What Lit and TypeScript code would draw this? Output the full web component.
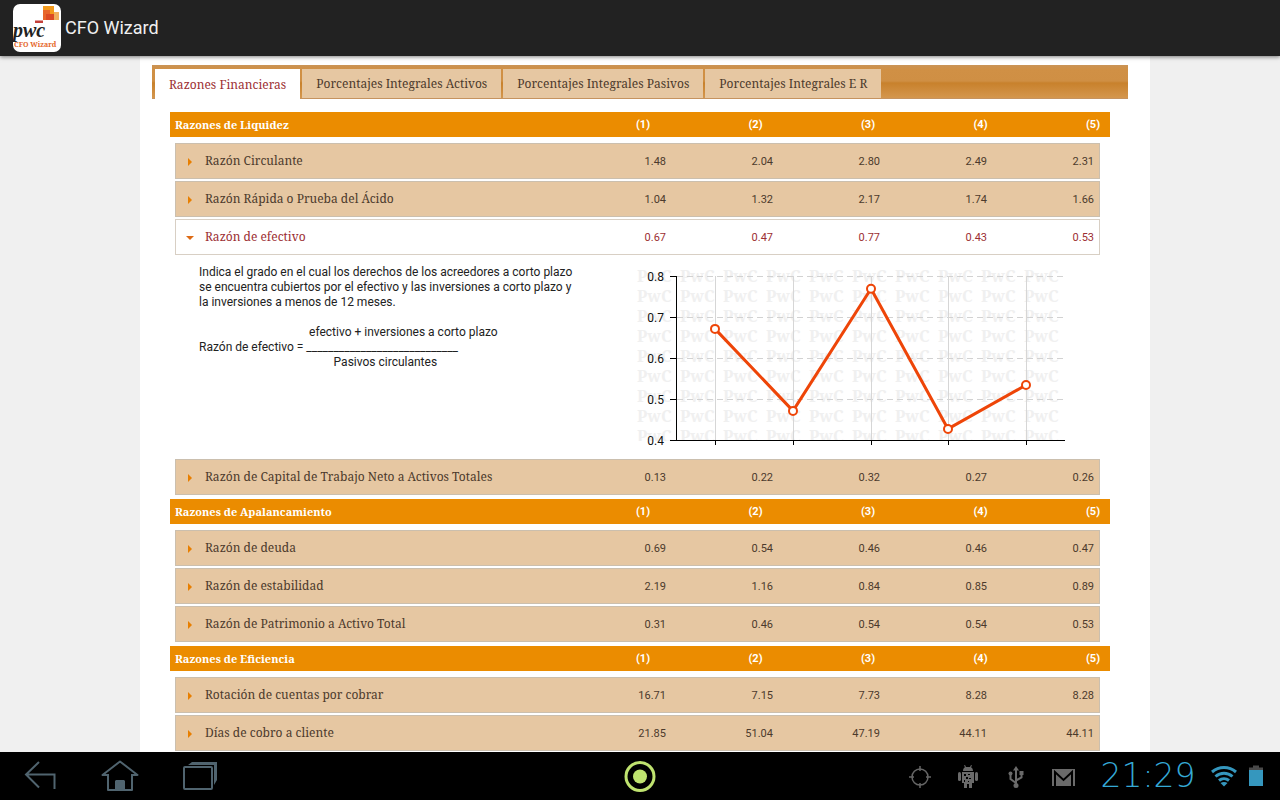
import { LitElement, html, svg, css, nothing } from "lit";
import { customElement, property, state } from "lit/decorators.js";
import { classMap } from "lit/directives/class-map.js";

interface Ratio {
  name: string;
  values: string[];
  series?: number[];
}

interface Group {
  title: string;
  ratios: Ratio[];
}

const TABS = [
  "Razones Financieras",
  "Porcentajes Integrales Activos",
  "Porcentajes Integrales Pasivos",
  "Porcentajes Integrales E R",
];

const GROUPS: Group[] = [
  {
    title: "Razones de Liquidez",
    ratios: [
      { name: "Razón Circulante", values: ["1.48", "2.04", "2.80", "2.49", "2.31"] },
      { name: "Razón Rápida o Prueba del Ácido", values: ["1.04", "1.32", "2.17", "1.74", "1.66"] },
      {
        name: "Razón de efectivo",
        values: ["0.67", "0.47", "0.77", "0.43", "0.53"],
        series: [0.671, 0.471, 0.769, 0.427, 0.534],
      },
      {
        name: "Razón de Capital de Trabajo Neto a Activos Totales",
        values: ["0.13", "0.22", "0.32", "0.27", "0.26"],
      },
    ],
  },
  {
    title: "Razones de Apalancamiento",
    ratios: [
      { name: "Razón de deuda", values: ["0.69", "0.54", "0.46", "0.46", "0.47"] },
      { name: "Razón de estabilidad", values: ["2.19", "1.16", "0.84", "0.85", "0.89"] },
      { name: "Razón de Patrimonio a Activo Total", values: ["0.31", "0.46", "0.54", "0.54", "0.53"] },
    ],
  },
  {
    title: "Razones de Eficiencia",
    ratios: [
      { name: "Rotación de cuentas por cobrar", values: ["16.71", "7.15", "7.73", "8.28", "8.28"] },
      { name: "Días de cobro a cliente", values: ["21.85", "51.04", "47.19", "44.11", "44.11"] },
    ],
  },
];

/* Line chart over a repeated word mark. */
@customElement("ratio-chart")
export class RatioChart extends LitElement {
  static styles = css`
    :host {
      display: block;
    }
    .chart {
      display: block;
      width: 100%;
      height: auto;
    }
    .mark {
      font: bold 16px "Noto Serif", "DejaVu Serif", serif;
      fill: #f0f0f0;
    }
    .label {
      font: 12px Roboto, sans-serif;
      fill: #111;
    }
  `;

  @property({ attribute: false }) points: number[] = [];

  render() {
    const levels = [0.8, 0.7, 0.6, 0.5, 0.4];
    const px = (i: number) => Math.round(79 + i * 77.75);
    const py = (v: number) => 12 + (0.8 - v) * 410;
    const line = this.points.map((v, i) => `${px(i)},${py(v)}`).join(" ");
    const marks = [];
    for (let r = 0; r < 9; r++) {
      for (let c = 0; c < 10; c++) {
        marks.push(svg`<text class="mark" x=${c * 43 + 1} y=${r * 20 + 18} aria-hidden="true">PwC</text>`);
      }
    }
    return html`
      <svg class="chart" viewBox="0 0 436 184" role="img" aria-label="Razón de efectivo">
        <defs><clipPath id="area"><rect x="0" y="0" width="436" height="177" /></clipPath></defs>
        <g clip-path="url(#area)">${marks}</g>
        ${levels.map((v) => {
          const y = Math.round(py(v)) + 0.5;
          return svg`
            <path d="M41 ${y}H427" stroke="#d2d2d2" stroke-dasharray="6 4" />
            <path d="M34 ${y}H41" stroke="#000" />
            <text class="label" x="28" y=${y + 4} text-anchor="end">${v.toFixed(1)}</text>`;
        })}
        ${this.points.map((_, i) => svg`
          <path d="M${px(i) + 0.5} 12V176" stroke="#d6d6d6" />
          <path d="M${px(i) + 0.5} 176V181" stroke="#000" />`)}
        <path d="M40.500 12V176.500H429" fill="none" stroke="#000" />
        <polyline points=${line} fill="none" stroke="#ee4508" stroke-width="3" stroke-linejoin="round" />
        ${this.points.map((v, i) => svg`
          <circle cx=${px(i)} cy=${py(v)} r="4" fill="#fff" stroke="#ee4508" stroke-width="2" />`)}
      </svg>
    `;
  }
}

/* System bar with navigation buttons, indicators and clock. */
@customElement("system-bar")
export class SystemBar extends LitElement {
  static styles = css`
    :host {
      display: block;
      flex: none;
    }
    .bar {
      display: grid;
      grid-template-columns: 1fr auto 1fr;
      align-items: center;
      height: 48px;
      background: #000;
    }
    .nav {
      display: flex;
      gap: 32px;
      padding-left: 16px;
    }
    .key {
      display: block;
      padding: 0;
      border: 0;
      background: none;
    }
    svg {
      display: block;
      flex: none;
    }
    .tray {
      display: flex;
      align-items: center;
      justify-content: flex-end;
      padding-right: 8px;
    }
    .clock {
      width: 120px;
      text-align: center;
      color: #35a9d6;
      font: 200 33px/48px "DejaVu Sans Light", "DejaVu Sans ExtraLight", "DejaVu Sans", sans-serif;
    }
  `;

  render() {
    return html`
      <footer class="bar">
        <nav class="nav">
          <button class="key" aria-label="Atrás">
            <svg width="48" height="48" fill="none" stroke="#50646f" stroke-width="2">
              <path d="M23 10L10 22.500L23 35.500M10 22.500H38.500V37" />
            </svg>
          </button>
          <button class="key" aria-label="Inicio">
            <svg width="48" height="48" fill="none" stroke="#50646f" stroke-width="2">
              <path d="M12 23H6.500L24 9.500L41.500 23H36M12 22V38H36V22" stroke-linejoin="round" />
              <path d="M20 28H28L29 29V38H19V29Z" fill="#50646f" stroke="none" />
            </svg>
          </button>
          <button class="key" aria-label="Recientes">
            <svg width="48" height="48" fill="none" stroke="#50646f" stroke-width="2">
              <rect x="8" y="15" width="28" height="22" rx="1" />
              <path d="M12 13L16 10H41V28L38 33V13Z" fill="#50646f" stroke="none" />
            </svg>
          </button>
        </nav>
        <button class="key" aria-label="Captura">
          <svg width="32" height="48">
            <circle cx="16" cy="24.500" r="14" fill="none" stroke="#bfe36f" stroke-width="3" />
            <circle cx="16" cy="24.500" r="7" fill="#bfe36f" />
          </svg>
        </button>
        <div class="tray">
          <svg width="48" height="48" fill="none" stroke="#666" stroke-width="1.500">
            <circle cx="24" cy="25" r="8" />
            <path d="M24 14V19M24 31V36M13 25H18M30 25H35" />
          </svg>
          <svg width="48" height="48" fill="#6a6a6a">
            <path d="M19 19C19 16.500 20.500 15.500 21 15.300L20 13.500L21 13L22 15H26L27 13L28 13.500L27 15.300C28 16 29 17 29 19Z" />
            <rect x="14" y="20" width="3" height="9" rx="1.500" />
            <rect x="31" y="20" width="3" height="9" rx="1.500" />
            <path d="M18 20H30V31H28V36H25V32H23V36H20V31H18Z" />
            <path d="M20 22H22V24H20ZM24 22H26V23H24ZM22 25H24V27H22ZM20 28H21V30H20ZM25 26H27V27H25ZM24 29H25V30H24Z" fill="#000" />
          </svg>
          <svg width="48" height="48" fill="none" stroke="#6a6a6a" stroke-width="2">
            <path d="M24 34V17M24 31L18.500 27V22M24 28.500L29.500 25.500V21" />
            <path d="M24 14L27 18.500H21Z" fill="#6a6a6a" stroke="none" />
            <circle cx="24" cy="33.500" r="2.500" fill="#6a6a6a" stroke="none" />
            <circle cx="18.500" cy="21.500" r="2" fill="#6a6a6a" stroke="none" />
            <rect x="27.500" y="19" width="4" height="4" fill="#6a6a6a" stroke="none" />
          </svg>
          <svg width="48" height="48">
            <rect x="12" y="17" width="23" height="17" fill="#6a6a6a" />
            <path d="M15 34V20L23.500 28L32 20V34" fill="none" stroke="#000" stroke-width="2" />
          </svg>
          <time class="clock">21:29</time>
          <svg width="32" height="48" fill="none" stroke="#3597be" stroke-width="3">
            <path d="M4 20C11 14 21 14 28 20M7.500 24.500C12.500 20 19.500 20 24.500 24.500M11 28.500C14 26 18 26 21 28.500" />
            <path d="M12.500 31C14.500 29.500 17.500 29.500 19.500 31L16 34.500Z" fill="#3597be" stroke="none" />
          </svg>
          <svg width="32" height="48">
            <path d="M13 13.500H19V15.500H23V18H9V15.500H13Z" fill="#4a4a4a" />
            <rect x="9" y="18" width="14" height="16" fill="#3597be" />
          </svg>
        </div>
      </footer>
    `;
  }
}

@customElement("app-root")
export class AppRoot extends LitElement {
  static styles = css`
    :host {
      display: flex;
      flex-direction: column;
      height: 100vh;
      overflow: hidden;
      background: #f0f0f0;
      color: #222;
      font-family: Roboto, sans-serif;
      --serif: "Droid Serif", "Noto Serif", "DejaVu Serif", serif;
    }
    * {
      box-sizing: border-box;
    }
    .topbar {
      display: flex;
      flex: none;
      align-items: center;
      gap: 4px;
      height: 56px;
      padding-left: 13px;
      background: #222;
      box-shadow: 0 1px 4px rgba(0, 0, 0, 0.5);
      z-index: 1;
    }
    .logo {
      display: block;
    }
    .logo-name {
      font: italic bold 20px "Liberation Serif", serif;
    }
    .logo-sub {
      font: bold 7px var(--serif);
    }
    .title {
      margin: 0;
      color: #f0f0f0;
      font-size: 18px;
      font-weight: 400;
      line-height: 24px;
    }
    .scroller {
      flex: 1;
      min-height: 0;
      overflow: hidden;
      padding-left: 10px;
    }
    .sheet {
      max-width: 1010px;
      min-height: 100%;
      margin: 0 auto;
      padding: 9px 22px 0 12px;
      background: #fff;
    }
    .tabs {
      display: flex;
      gap: 2px;
      height: 34px;
      padding: 4px 3px 0;
      border-bottom: 1px solid #c6935f;
      background: linear-gradient(#c99356 0, #d09045 4px, #cf8f44 16px, #c8812c 18px, #d59850 34px);
    }
    .tab {
      padding: 0 14px;
      border: 0;
      background: #e6c7a2;
      color: #4c3a2c;
      font: 12px/29px var(--serif);
      white-space: nowrap;
    }
    .tab.active {
      height: 30px;
      background: #fff;
      color: #9c2f33;
    }
    .panel {
      padding: 13px 18px 0;
    }
    .group {
      display: block;
      margin-bottom: 4px;
    }
    .body {
      display: grid;
      gap: 2px;
      padding: 6px 10px 0 5px;
    }
    .head {
      display: grid;
      grid-template-columns: 29fr repeat(5, 9fr);
      align-items: center;
      height: 25px;
      padding: 0 10px 0 5px;
      background: #eb8c00;
      color: #fff;
      font-size: 11px;
      font-weight: 700;
      line-height: 15px;
    }
    .headwrap {
      display: block;
    }
    .head-name {
      padding: 0;
      text-align: left;
      font-family: var(--serif);
      font-size: 11px;
    }
    .year {
      padding: 0;
      text-align: right;
    }
    .row {
      display: grid;
      grid-template-columns: 1fr repeat(5, 107px);
      align-items: center;
      height: 36px;
      padding-right: 5px;
      border: 1px solid #cbbfae;
      background: #e6c7a2;
      color: #4c3a2c;
    }
    .row.open {
      border-color: #d8cfc4;
      background: #fff;
      color: #9c2f33;
    }
    .cell {
      padding: 0;
      font-weight: 400;
      text-align: left;
    }
    .toggle {
      display: flex;
      align-items: center;
      gap: 10px;
      width: 100%;
      height: 34px;
      padding: 0 0 0 9px;
      border: 0;
      background: none;
      color: inherit;
      font: 12px/20px var(--serif);
      text-align: left;
      white-space: nowrap;
    }
    .arrow {
      flex: none;
    }
    .value {
      padding: 0;
      font-size: 11px;
      line-height: 15px;
      text-align: right;
    }
    .detail,
    .detail-cell {
      display: block;
      padding: 0;
    }
    .detail-grid {
      display: grid;
      grid-template-columns: 384px minmax(0, 436px);
      column-gap: 53px;
      min-height: 200px;
      padding: 7px 0 0 24px;
    }
    .text {
      font-size: 12px;
      line-height: 15px;
      padding-top: 1px;
    }
    .text p {
      margin: 0 0 15px;
    }
    .formula {
      display: grid;
      grid-template-columns: auto 1fr;
      column-gap: 3px;
      align-items: center;
    }
    .fraction {
      width: 194px;
      text-align: center;
    }
    .rule {
      text-align: left;
    }
    .denominator {
      padding-right: 36px;
    }
  `;

  @state() private tab = 0;
  @state() private open = "Razón de efectivo";

  private renderDetail(ratio: Ratio) {
    if (!ratio.series) return nothing;
    return html`
      <tr class="detail">
        <td class="detail-cell" colspan="6">
          <div class="detail-grid">
            <div class="text">
              <p>
                Indica el grado en el cual los derechos de los acreedores a corto plazo se encuentra
                cubiertos por el efectivo y las inversiones a corto plazo y la inversiones a menos de
                12 meses.
              </p>
              <div class="formula">
                <span>Razón de efectivo =</span>
                <div class="fraction">
                  <div>efectivo + inversiones a corto plazo</div>
                  <div class="rule">____________________________</div>
                  <div class="denominator">Pasivos circulantes</div>
                </div>
              </div>
            </div>
            <ratio-chart .points=${ratio.series}></ratio-chart>
          </div>
        </td>
      </tr>
    `;
  }

  private renderRatio(ratio: Ratio) {
    const open = this.open === ratio.name;
    return html`
      <tr class=${classMap({ row: true, open })}>
        <th class="cell" scope="row">
          <button
            class="toggle"
            aria-expanded=${open ? "true" : "false"}
            @click=${() => (this.open = open ? "" : ratio.name)}
          >
            <svg class="arrow" width="10" height="10" aria-hidden="true">
              ${open
                ? svg`<path d="M1 4H9L5 8Z" fill="#dd6a14" />`
                : svg`<path d="M3 2L7 6L3 10Z" fill="#e87f00" />`}
            </svg>
            ${ratio.name}
          </button>
        </th>
        ${ratio.values.map((v) => html`<td class="value">${v}</td>`)}
      </tr>
      ${open ? this.renderDetail(ratio) : nothing}
    `;
  }

  render() {
    return html`
      <header class="topbar">
        <svg class="logo" width="48" height="48" viewBox="0 0 48 48" aria-hidden="true">
          <rect width="48" height="48" rx="7" fill="#fff" />
          <path d="M30 2H41V8H45V16H30Z" fill="#f39a1c" />
          <path d="M30 6H37V16H30Z" fill="#e8662b" />
          <path d="M33 10H41V16H33Z" fill="#dc4a25" />
          <path d="M41 8H46V16H41Z" fill="#f0b060" />
          <path d="M22 16.500H30V19H22Z" fill="#c4403a" />
          <text class="logo-name" x="0" y="33" fill="#222">pwc</text>
          <text class="logo-sub" x="1" y="43" fill="#e5672a">CFO Wizard</text>
        </svg>
        <h1 class="title">CFO Wizard</h1>
      </header>
      <main class="scroller">
        <div class="sheet">
          <div class="tabs" role="tablist">
            ${TABS.map(
              (name, i) => html`
                <button
                  class=${classMap({ tab: true, active: i === this.tab })}
                  role="tab"
                  aria-selected=${i === this.tab ? "true" : "false"}
                  @click=${() => (this.tab = i)}
                >${name}</button>
              `
            )}
          </div>
          <div class="panel" role="tabpanel">
            ${GROUPS.map(
              (group) => html`
                <table class="group">
                  <thead class="headwrap">
                    <tr class="head">
                      <th class="head-name" scope="col">${group.title}</th>
                      ${[1, 2, 3, 4, 5].map((n) => html`<th class="year" scope="col">(${n})</th>`)}
                    </tr>
                  </thead>
                  <tbody class="body">
                    ${group.ratios.map((r) => this.renderRatio(r))}
                  </tbody>
                </table>
              `
            )}
          </div>
        </div>
      </main>
      <system-bar></system-bar>
    `;
  }
}
